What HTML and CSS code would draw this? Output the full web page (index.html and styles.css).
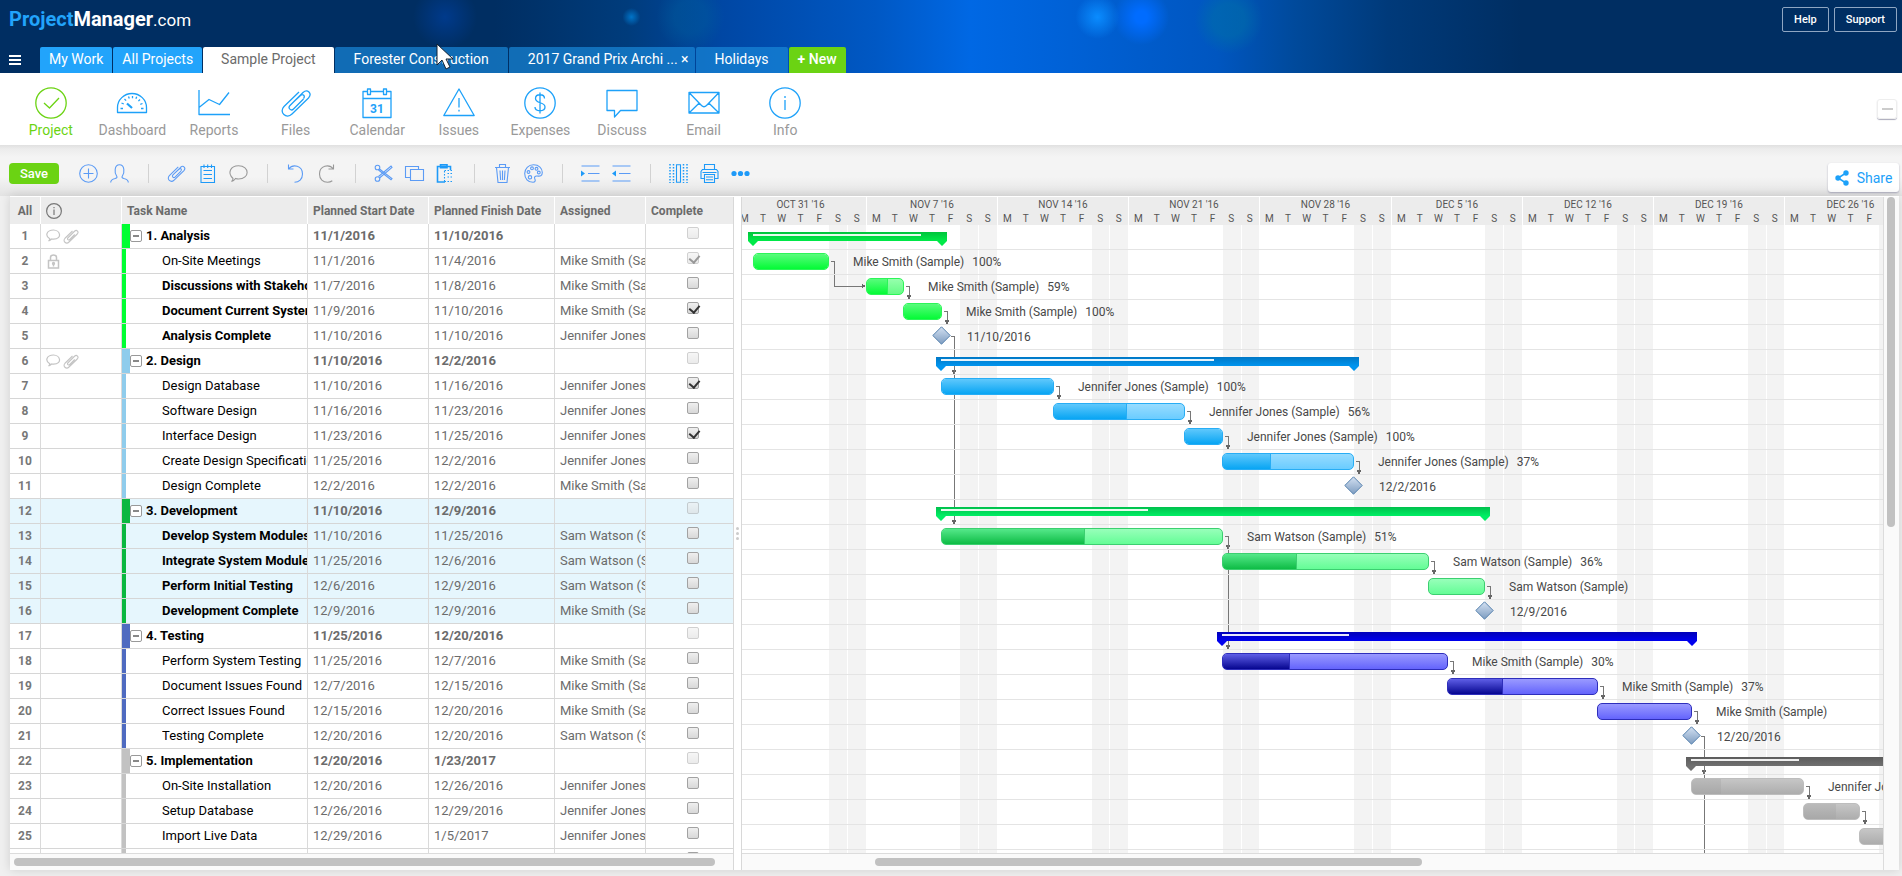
FILE: index.html
```html
<!DOCTYPE html>
<html lang="en">
<head>
<meta charset="utf-8">
<title>Sample Project - ProjectManager.com</title>
<link rel="stylesheet" href="styles.css">
</head>
<body>
<div class="app">
  <header class="masthead">
    <div class="brand-row">
      <a class="brand" href="#"><span class="brand-first">Project</span><span class="brand-second">Manager</span><span class="brand-third">.com</span></a>
      <div class="account">
        <button class="ghost" type="button">Help</button>
        <button class="ghost" type="button">Support</button>
      </div>
    </div>
    <nav class="tabs" aria-label="Open projects">
      <button class="menu" type="button" aria-label="Menu"><svg width="12" height="10" viewBox="0 0 12 10"><path d="M0 1h12M0 5h12M0 9h12" stroke="#fff" stroke-width="2"/></svg></button>
      <a class="tab tab-main" href="#">My Work</a>
      <a class="tab tab-main" href="#">All Projects</a>
      <a class="tab tab-open" href="#" aria-current="page">Sample Project</a>
      <a class="tab" href="#">Forester Construction</a>
      <a class="tab tab-closable" href="#">2017 Grand Prix Archi ... <span class="tab-close">×</span></a>
      <a class="tab" href="#">Holidays</a>
      <a class="tab tab-new" href="#"><b>+</b> New</a>
    </nav>
    <svg class="cursor" width="18" height="28" viewBox="0 0 18 28"><path d="M1 1v21l5-5 4 9 4-2-4-8h7z" fill="#fff" stroke="#123" stroke-width="1"/></svg>
  </header>

  <div class="modules">
    <nav class="module-list" aria-label="Project views">
      <a class="module module-on" href="#"><svg viewBox="0 0 32 32"><circle cx="16" cy="16" r="15.200"/><path d="M9 16l5.500 5L24 11"/></svg>Project</a>
      <a class="module" href="#"><svg viewBox="0 0 32 32"><path d="M1.500 25.500v-5a14.500 14 0 0 1 29 0v5z"/><path d="M11 16.500l5 4.500" stroke-width="2.200"/><path d="M4.500 21.500h2.500M25 21.500h2.500M5.500 16l2.300 1M8.500 12l1.600 1.600M12.500 9.500l.8 2M16.500 9v2.200M20.700 9.700l-.8 2M24 12.500l-1.600 1.600M26.500 16.500l-2.200.8"/></svg>Dashboard</a>
      <a class="module" href="#"><svg viewBox="0 0 32 32"><path d="M1 3v24.500h31M1 20.500l10-8 10.500 5L31 5.500"/></svg>Reports</a>
      <a class="module" href="#"><svg viewBox="0 0 32 32"><path d="M23.500 12L13.500 22c-2.500 2.500-6-1-3.500-3.500L23 5.500c4.500-4 9.500 1 5.500 5.500L12 27c-5.500 5.500-13.500-1.500-8-7.500L19 5M14 14.500l6.500-6c2.500-2 5 .5 3 3"/></svg>Files</a>
      <a class="module" href="#"><svg viewBox="0 0 32 32"><path d="M6.500 4.500H2v26h28v-26h-4.500M9.500 4.500h13M2 11.500h28"/><path d="M6.500 2h3v5.500h-3zM22.500 2h3v5.500h-3z"/><text class="icon-date" x="16" y="25.500">31</text></svg>Calendar</a>
      <a class="module" href="#"><svg viewBox="0 0 32 32"><path d="M16 2l15.200 26.500H.8zM16 11v9.500M16 22.800v1.800"/></svg>Issues</a>
      <a class="module" href="#"><svg viewBox="0 0 32 32"><circle cx="16" cy="16" r="15.200"/><path d="M20.500 11.500c0-5-9-5-9 0 0 5.500 9.500 3 9.500 8.500 0 5-10 5-10 0M16 5.500v21"/></svg>Expenses</a>
      <a class="module" href="#"><svg viewBox="0 0 32 32"><path d="M1 3.500h30v20H14.500L8.500 30v-6.500H1z"/></svg>Discuss</a>
      <a class="module" href="#"><svg viewBox="0 0 32 32"><path d="M1 5.500h30v20.500H1zM1 5.500l12.500 13c1.600 1.600 3.400 1.600 5 0L31 5.500M1 26l10.500-10.200M31 26L20.500 15.800"/></svg>Email</a>
      <a class="module" href="#"><svg viewBox="0 0 32 32"><circle cx="16" cy="16" r="15.200"/><path d="M16 13v10M16 9v2"/></svg>Info</a>
    </nav>
    <button class="collapse" type="button" aria-label="Collapse"></button>
  </div>

  <div class="toolbar">
    <button class="save" type="button">Save</button>
    <div class="tools">
      <button class="tool" type="button" aria-label="Add task"><svg viewBox="0 0 19 19"><circle cx="9.500" cy="9.500" r="8.800"/><path d="M9.500 4.500v10M4.500 9.500h10"/></svg></button>
      <button class="tool" type="button" aria-label="Assign"><svg viewBox="0 0 19 19"><path d="M.7 18.500c0-3 2-3.500 4.500-4 2-.5 2.200-1.300 1.300-2.700C4.500 9 4 .8 9.500.8s5 8.200 3 11c-.9 1.400-.7 2.200 1.300 2.700 2.500.5 4.500 1 4.500 4"/></svg></button>
      <span class="rule"></span>
      <button class="tool" type="button" aria-label="Attach"><svg viewBox="0 0 32 32"><path stroke-width="1.800" d="M23.500 12L13.500 22c-2.500 2.500-6-1-3.500-3.500L23 5.500c4.500-4 9.500 1 5.500 5.500L12 27c-5.500 5.500-13.500-1.500-8-7.500L19 5M14 14.500l6.500-6c2.500-2 5 .5 3 3"/></svg></button>
      <button class="tool tool-bright" type="button" aria-label="Notes"><svg viewBox="0 0 19 19"><path d="M3 2.500h13.500v16H3zM5.500 6.500h8.500M5.500 10.500h8.500M5.500 14.500h8.500M6 .5v3.500M9.700.5v3.500M13.500.5v3.500"/></svg></button>
      <button class="tool tool-off" type="button" aria-label="Comment"><svg viewBox="0 0 19 19"><path d="M2.500 17.500c1-.8 1.500-2 1.500-3C-2 9 1.500 1.800 9.500 1.800c11.500 0 11.500 13.200 0 13.200-1 0-2-.2-3-.5-1 1.500-2 2.500-4 3z"/></svg></button>
      <span class="rule"></span>
      <button class="tool" type="button" aria-label="Undo"><svg viewBox="0 0 19 19"><path d="M2.500.5v4.500h5M2.500 5C7-.5 16.500 1.500 16.500 10c0 5-3.500 8.300-8 8.300"/></svg></button>
      <button class="tool tool-off" type="button" aria-label="Redo"><svg viewBox="0 0 19 19"><path d="M16.500.5v4.500h-5M16.500 5C12-.5 2.500 1.500 2.500 10c0 5 3.500 8.300 8 8.300 2 0 3.500-.6 4.800-1.600"/></svg></button>
      <span class="rule"></span>
      <button class="tool" type="button" aria-label="Cut"><svg viewBox="0 0 19 19"><circle cx="3.500" cy="3.500" r="2.300"/><circle cx="3.500" cy="15" r="2.300"/><path d="M5.500 5l12.500 9.500-1 1.300L4.500 6M5.500 14L18 3.500 17 2 4.500 12.500"/></svg></button>
      <button class="tool" type="button" aria-label="Copy"><svg viewBox="0 0 19 19"><path d="M5.500 5.500h13v11h-13zM5.500 13.500h-5v-11h13v3"/></svg></button>
      <button class="tool tool-bright" type="button" aria-label="Paste"><svg viewBox="0 0 19 19"><path stroke-width="1.600" d="M9 18H1.500V2.500h13V6M4.500.8h6.500v3H4.500z"/><path stroke-dasharray="1.500 1.500" d="M8.500 7v11M8.500 6.500h8M11.500 9.500h6M11.500 13h6M8.500 17.500h9"/></svg></button>
      <span class="rule"></span>
      <button class="tool" type="button" aria-label="Delete"><svg viewBox="0 0 19 19"><path d="M2 3.500h15M6.500 3.500v-3h6v3M3.500 3.500l1.500 15h9l1.500-15M7 6.500l.6 9.500M9.500 6.500V16M12 6.500l-.6 9.500"/></svg></button>
      <button class="tool" type="button" aria-label="Colour"><svg viewBox="0 0 19 19"><path d="M9.500.8c5.500 0 8.800 3.400 8.800 7.700 0 3.500-2.300 4-5 3.500-2.300-.4-3.300 1-2.500 2.700 1 2 .3 3.600-1.800 3.600C4 18.300.7 14.500.7 9.500S4.500.8 9.500.8z"/><circle cx="4.500" cy="8" r="1.400"/><circle cx="8" cy="4.300" r="1.400"/><circle cx="12.500" cy="4.800" r="1.400"/><circle cx="14.800" cy="8.500" r="1.400"/><circle cx="6" cy="13.300" r="1.700"/></svg></button>
      <span class="rule"></span>
      <button class="tool" type="button" aria-label="Indent"><svg viewBox="0 0 19 19"><path d="M.5 2h18M7 9.500h11.500M.5 17h18"/><path class="solid" d="M0 6.500l4 3-4 3z"/></svg></button>
      <button class="tool" type="button" aria-label="Outdent"><svg viewBox="0 0 19 19"><path d="M.5 2h18M7 9.500h11.500M.5 17h18"/><path class="solid" d="M4 6.500l-4 3 4 3z"/></svg></button>
      <span class="rule"></span>
      <button class="tool tool-bright" type="button" aria-label="Columns"><svg viewBox="0 0 19 19"><path d="M7.500.7h4v17.600h-4z"/><path stroke-width="1.500" stroke-dasharray="1.500 1.500" d="M1 0v19M4.500 0v19M14.500 0v19M18 0v19"/></svg></button>
      <button class="tool tool-bright" type="button" aria-label="Print"><svg viewBox="0 0 19 19"><path d="M4.500 5.500v-5h10v5M4 14.500H1v-7l1.500-2h14L18 7.500v7h-3M4.500 10.500h10v8h-10zM6 13h7M6 15.700h7M2.500 8.500h14"/></svg></button>
      <button class="tool tool-bright" type="button" aria-label="More"><svg viewBox="0 0 19 19"><g class="solid"><circle cx="3" cy="9.500" r="2.600"/><circle cx="9.500" cy="9.500" r="2.600"/><circle cx="16" cy="9.500" r="2.600"/></g></svg></button>
    </div>
    <button class="share" type="button"><svg width="14" height="16" viewBox="0 0 14 16"><path d="M11 3L3 8l8 5" fill="none" stroke="#1da1f9" stroke-width="1.500"/><g fill="#1da1f9"><circle cx="11" cy="3" r="2.700"/><circle cx="3" cy="8" r="2.700"/><circle cx="11" cy="13" r="2.700"/></g></svg>Share</button>
  </div>

  <main class="panel">
    <section class="sheet" aria-label="Tasks">
      <div class="sheet-view">
        <table class="tasks">
          <colgroup><col class="c-num"><col class="c-info"><col class="c-name"><col class="c-start"><col class="c-finish"><col class="c-who"><col class="c-done"></colgroup>
          <thead>
            <tr>
              <th class="num">All</th>
              <th class="info"><svg width="16" height="16" viewBox="0 0 16 16" fill="none" stroke="#777" stroke-width="1.200"><circle cx="8" cy="8" r="7.400"/><path d="M8 6.500v5.500M8 4v1.300"/></svg></th>
              <th>Task Name</th><th>Planned Start Date</th><th>Planned Finish Date</th><th>Assigned</th><th>Complete</th>
            </tr>
          </thead>
          <tbody id="rows"></tbody>
        </table>
      </div>
      <div class="hscroll"><div class="thumb thumb-sheet"></div></div>
    </section>
    <div class="splitter"><i></i><i></i><i></i></div>
    <section class="gantt" aria-label="Gantt chart">
      <div class="chart">
        <div class="weeks" id="weeks"></div>
        <div class="plot">
          <div class="bands" id="bands"></div>
          <svg class="links" id="links"></svg>
          <div id="bars"></div>
        </div>
      </div>
      <div class="hscroll"><div class="thumb thumb-chart"></div></div>
    </section>
    <div class="vscroll"><div class="vthumb"></div></div>
  </main>
</div>
<script src="app.js"></script>
</body>
</html>
```
FILE: styles.css
```css
* { box-sizing: border-box; }
body { margin: 0; font-family: Roboto, "Liberation Sans", sans-serif; font-size: 13px; color: #6b6b6b; background: #f0f0f0; }
button { font: inherit; cursor: pointer; padding: 0; border: 0; background: none; }
a { color: inherit; text-decoration: none; }

.app { display: flex; flex-direction: column; height: 100vh; overflow: hidden; }

/* Masthead */
.masthead {
  position: relative; flex: none; height: 73px; display: flex; flex-direction: column; justify-content: space-between; color: #fff;
  background:
    radial-gradient(circle at 23.4% 17px, rgba(0, 70, 180, .5), transparent 32px),
    radial-gradient(circle at 33.2% 17px, #0074c8, transparent 9px),
    radial-gradient(circle at 57.7% 17px, #0a8cff, transparent 22px),
    radial-gradient(circle at 60% 17px, #006cff 6px, transparent 28px),
    radial-gradient(circle at 64.6% 20px, rgba(0, 110, 170, .6) 16px, transparent 34px),
    radial-gradient(circle at 36.3% 17px, rgba(0, 100, 160, .35) 16px, transparent 34px),
    linear-gradient(90deg, #002e62 0, #002e62 26%, #003c7c 33%, #0047a4 38%, #0058c4 46%, #0068e4 51%, #0060d4 57%, #0056c0 64%, #004a9c 68%, #003a7a 73%, #002e62 80%);
}
.brand-row { display: flex; justify-content: space-between; padding: 7px 5px 0 9px; }
.brand { font-size: 20px; line-height: 25px; }
.brand-first { color: #22a4fb; font-weight: 700; }
.brand-second { font-weight: 700; }
.brand-third { font-size: 17px; }
.account { display: flex; gap: 5px; }
.ghost { height: 25px; padding: 0 11px; border: 1px solid #8fa6c2; border-radius: 2px; color: #fff; font-size: 11px; font-weight: 500; }
.tabs { display: flex; gap: 1px; height: 26px; font-size: 14px; line-height: 25px; }
.menu { width: 39px; padding-left: 9px; display: flex; align-items: center; }
.tab { padding: 0 19px; background: rgba(24, 136, 216, .7); border-radius: 2px 2px 0 0; white-space: nowrap; }
.tab-main { padding: 0 9px; background: #22a4fb; }
.tab-open { padding: 0 18px; background: #fff; color: #6b6b6b; }
.tab-closable { padding-right: 6px; }
.tab-new { padding: 0 9px; background: #6bd313; font-weight: 500; }
.cursor { position: absolute; left: 436px; top: 43px; }

/* Module navigation */
.modules { flex: none; height: 72px; display: flex; align-items: center; justify-content: space-between; padding: 0 5px 0 10px; background: #fff; }
.module-list { display: grid; grid-template-columns: repeat(10, 1fr); width: 816px; height: 72px; padding-top: 14px; }
.module { display: flex; flex-direction: column; align-items: center; gap: 2px; font-size: 14px; line-height: 18px; color: #999; }
.module svg { width: 32px; height: 32px; fill: none; stroke: #1da1f9; stroke-width: 1.3; stroke-linejoin: round; }
.module-on { color: #6bd313; }
.module-on svg { stroke: #6bd313; }
.module .icon-date { fill: #1da1f9; stroke: none; font-size: 12px; font-weight: 700; text-anchor: middle; }
.collapse { width: 20px; height: 20px; border-radius: 3px; border: 1px solid #eee; box-shadow: 0 1px 1px #aab; display: grid; place-items: center; }
.collapse::before { content: ""; width: 11px; height: 2px; background: #ccc; }

/* Toolbar */
.toolbar {
  flex: none; height: 51px; display: flex; align-items: flex-start; padding: 18px 3px 0 9px;
  background: linear-gradient(#e0e0e0 0, #ececec 4px, #f4f4f4 12px, #f4f4f4 32px, #e3e3e3 100%);
}
.save { width: 50px; height: 21px; border-radius: 4px; background: #6bd313; color: #fff; font-weight: 500; }
.tools { display: flex; align-items: center; height: 21px; margin-left: 20px; }
.tool { width: 19px; height: 19px; color: #5b9bf5; }
.tool + .tool { margin-left: 12px; }
.tool svg { display: block; width: 19px; height: 19px; fill: none; stroke: currentColor; stroke-width: 1.1; overflow: visible; }
.tool-bright { color: #1e9af8; }
.tool-off { color: #999; }
.tool svg .solid { fill: #1e9af8; stroke: none; }
.rule { width: 1px; height: 19px; margin: 0 18px 0 19px; background: #d2d2d2; }
.share { width: 71px; height: 29px; margin-left: auto; display: flex; align-items: center; justify-content: center; gap: 8px; border-radius: 3px; background: #fff; box-shadow: 0 1px 2px #aab; color: #1da1f9; font-size: 14px; }

/* Panel */
.panel { flex: 1; min-height: 0; display: flex; margin: 0 3px 6px 10px; background: #fff; border-top: 1px solid #fff; box-shadow: 0 0 10px rgba(0, 0, 0, .14); }
.sheet { flex: none; width: 724px; display: flex; flex-direction: column; border-right: 1px solid #d8d8d8; }
.sheet-view { flex: 1; min-height: 0; overflow: hidden; }
.tasks { table-layout: fixed; width: 724px; border-collapse: separate; border-spacing: 0; line-height: 16px; }
.c-num { width: 31px; } .c-info { width: 81px; } .c-name { width: 186px; } .c-start { width: 121px; } .c-finish { width: 126px; } .c-who { width: 91px; } .c-done { width: 88px; }
.tasks th { height: 27px; padding: 0 5px; background: #ececec; border-right: 1px solid #fff; font-size: 12px; font-weight: 700; text-align: left; white-space: nowrap; }
.tasks td { height: 25px; padding: 0 5px; border-right: 1px solid #dadada; border-bottom: 1px solid #d6d6d6; overflow: hidden; white-space: nowrap; }
.tasks .num { padding: 0; text-align: center; font-size: 12px; font-weight: 700; color: #777; }
.tasks th.num { color: #6b6b6b; }
.tasks .info { padding: 0 0 0 5px; }
.tasks .info svg { display: block; }
.marks { display: flex; gap: 2px; }
.tasks .name { padding: 0; color: #000; }
.label { display: flex; align-items: center; height: 24px; overflow: hidden; border-left: 4px solid; padding-left: 36px; }
.label span { flex: 1; min-width: 0; overflow: hidden; color: #000; }
.group .label { border-left-width: 8px; padding-left: 0; gap: 4px; }
.group td { font-weight: 700; }
.strong .name { font-weight: 700; }
.picked td { background: #e6f6fd; }
.fold { width: 12px; height: 12px; border: 1px solid #999; border-radius: 2px; background: #fff; display: grid; place-items: center; }
.fold::before { content: ""; width: 6px; height: 2px; background: #888; }
.g1 .label { border-color: #00ff32; }
.g2 .label { border-color: #8fccec; }
.g3 .label { border-color: #0bb740; }
.g4 .label { border-color: #4f6bc0; }
.g5 .label { border-color: #c2c2c2; }
.tasks .done { vertical-align: top; padding-right: 3px; padding-left: 10px; }
.tick { appearance: none; display: block; width: 12px; height: 12px; margin: 3px auto 0; border: 1px solid #a2a2a2; border-radius: 2px; background: linear-gradient(#efefef, #d8d8d8); position: relative; }
.tick:disabled { opacity: .5; }
.tick:checked::before { content: ""; position: absolute; left: 3px; top: 0; width: 5px; height: 8px; border: solid #333; border-width: 0 2px 2px 0; transform: rotate(40deg); }

/* Scrollbars */
.hscroll { flex: none; height: 17px; padding: 4px; background: #fafafa; border-top: 1px solid #dcdcdc; }
.thumb { height: 8px; border-radius: 4px; background: #c1c1c1; }
.thumb-sheet { width: 98%; }
.thumb-chart { width: 48.3%; margin-left: 11.4%; }
.vscroll { flex: none; width: 16px; padding: 0 4px 0 3px; background: #fafafa; border-left: 1px solid #dcdcdc; }
.vthumb { height: 49%; border-radius: 4px; background: #c1c1c1; }
.splitter { flex: none; width: 8px; display: flex; flex-direction: column; align-items: center; justify-content: center; gap: 2px; border-right: 1px solid #d8d8d8; }
.splitter i { width: 3px; height: 3px; border-radius: 50%; background: #ccc; }

/* Gantt */
.gantt { flex: 1; min-width: 0; display: flex; flex-direction: column; }
.chart { flex: 1; min-height: 0; overflow: hidden; color: #555; }
.weeks { display: flex; height: 28px; margin-left: -7px; background: #ececec; }
.week { flex: none; border-right: 1px solid #fff; font-size: 10px; text-align: center; }
.week-title { line-height: 15px; }
.days { display: grid; grid-template-columns: repeat(7, 1fr); line-height: 13px; }
.plot { position: relative; }
.band { position: absolute; top: 0; bottom: 0; background: #f3f3f3; border-right: 1px solid #fff; }
.links { position: absolute; left: 0; top: 0; width: 100%; height: 100%; shape-rendering: crispEdges; }
.lane { position: relative; height: 25px; border-bottom: 1px solid #e4e4e4; }
.bar { position: absolute; top: 3px; height: 17px; border: 1px solid; border-radius: 5px; overflow: hidden; }
.bar-done { height: 100%; border-right: 1px solid; border-color: inherit; }
.bar-done.full { border-right: 0; }
.caption { position: absolute; top: 4px; font-size: 12px; line-height: 17px; color: #484848; white-space: nowrap; }
.caption span { margin-left: 8px; }
.summary { position: absolute; top: 7px; height: 14px; clip-path: polygon(0 0, 100% 0, 100% 9px, calc(100% - 5px) 14px, calc(100% - 10px) 9px, 10px 9px, 5px 14px, 0 9px); padding: 2px 5px; }
.summary div { height: 2px; background: #fff; opacity: .9; }
.diamond { position: absolute; top: 1px; }
.k1 .summary { background: linear-gradient(#00c43c, #00ea48 9px); }
.k2 .summary { background: linear-gradient(#0078c6, #0094ee 9px); }
.k3 .summary { background: linear-gradient(#00c04c, #00ee64 9px); }
.k4 .summary { background: linear-gradient(#0000b8, #0000ee 9px); }
.k5 .summary { background: linear-gradient(#5c5c5c, #707070 9px); }
.k1 .bar { border-color: #2cf558; background: linear-gradient(#96ffad, #66fb86); }
.k1 .bar-done { background: linear-gradient(#58fc7c, #04fb36); }
.k2 .bar { border-color: #27adf5; background: linear-gradient(#98dcff, #6accff); }
.k2 .bar-done { background: linear-gradient(#5fc8fc, #08a5f3); }
.k3 .bar { border-color: #3ccf70; background: linear-gradient(#98ffba, #64fd96); }
.k3 .bar-done { background: linear-gradient(#55e88a, #0ebc45); }
.k4 .bar { border-color: #2e2ebb; background: linear-gradient(#9a9aff, #6464fc); }
.k4 .bar-done { background: linear-gradient(#5e5ee6, #060690); }
.k5 .bar { border-color: #bdbdbd; background: linear-gradient(#c6c6c6, #adadad); }
.k5 .bar-done { background: linear-gradient(#bababa, #a8a8a8); border-right: 0; }
```
FILE: app.js
```js
// Day numbers count from Monday, October 31 2016.
const DAY = 18.75, ORIGIN = -6.6, ROW = 25;
const MS = 'Mike Smith (Sample)', JJ = 'Jennifer Jones (Sample)', SW = 'Sam Watson (Sample)';

// group, name, start, finish, assigned, flags, chart: [kind, from, to, percent, caption]
// flags: G group, B bold, P picked, C checked, D disabled box
const tasks = [
  [1, '1. Analysis', '11/1/2016', '11/10/2016', '', 'GD', ['sum', 1, 11, 89]],
  [1, 'On-Site Meetings', '11/1/2016', '11/4/2016', MS, 'CD', ['bar', 1, 5, 100, '100%']],
  [1, 'Discussions with Stakeholders', '11/7/2016', '11/8/2016', MS, 'B', ['bar', 7, 9, 59, '59%']],
  [1, 'Document Current Systems', '11/9/2016', '11/10/2016', MS, 'BC', ['bar', 9, 11, 100, '100%']],
  [1, 'Analysis Complete', '11/10/2016', '11/10/2016', JJ, 'B', ['mile', 11, 11]],
  [2, '2. Design', '11/10/2016', '12/2/2016', '', 'GD', ['sum', 11, 33, 66]],
  [2, 'Design Database', '11/10/2016', '11/16/2016', JJ, 'C', ['bar', 11, 17, 100, '100%']],
  [2, 'Software Design', '11/16/2016', '11/23/2016', JJ, '', ['bar', 17, 24, 56, '56%']],
  [2, 'Interface Design', '11/23/2016', '11/25/2016', JJ, 'C', ['bar', 24, 26, 100, '100%']],
  [2, 'Create Design Specification', '11/25/2016', '12/2/2016', JJ, '', ['bar', 26, 33, 37, '37%']],
  [2, 'Design Complete', '12/2/2016', '12/2/2016', MS, '', ['mile', 33, 33]],
  [3, '3. Development', '11/10/2016', '12/9/2016', '', 'GPD', ['sum', 11, 40, 38]],
  [3, 'Develop System Modules', '11/10/2016', '11/25/2016', SW, 'BP', ['bar', 11, 26, 51, '51%']],
  [3, 'Integrate System Modules', '11/25/2016', '12/6/2016', SW, 'BP', ['bar', 26, 37, 36, '36%']],
  [3, 'Perform Initial Testing', '12/6/2016', '12/9/2016', SW, 'BP', ['bar', 37, 40, 0, '']],
  [3, 'Development Complete', '12/9/2016', '12/9/2016', MS, 'BP', ['mile', 40, 40]],
  [4, '4. Testing', '11/25/2016', '12/20/2016', '', 'GD', ['sum', 26, 51, 27]],
  [4, 'Perform System Testing', '11/25/2016', '12/7/2016', MS, '', ['bar', 26, 38, 30, '30%']],
  [4, 'Document Issues Found', '12/7/2016', '12/15/2016', MS, '', ['bar', 38, 46, 37, '37%']],
  [4, 'Correct Issues Found', '12/15/2016', '12/20/2016', MS, '', ['bar', 46, 51, 0, '']],
  [4, 'Testing Complete', '12/20/2016', '12/20/2016', SW, '', ['mile', 51, 51]],
  [5, '5. Implementation', '12/20/2016', '1/23/2017', '', 'GD', ['sum', 51, 85, 17]],
  [5, 'On-Site Installation', '12/20/2016', '12/26/2016', JJ, '', ['bar', 51, 57, 26, '26%']],
  [5, 'Setup Database', '12/26/2016', '12/29/2016', JJ, '', ['bar', 57, 60, 58, '']],
  [5, 'Import Live Data', '12/29/2016', '1/5/2017', JJ, '', ['bar', 60, 67, 0, '']],
  [5, '', '', '', '', '', null]
];
const links = [[2, 3], [3, 4], [4, 5], [5, 7], [5, 13], [7, 8], [8, 9], [9, 10], [10, 11], [13, 14], [13, 18],
  [14, 15], [15, 16], [18, 19], [19, 20], [20, 21], [21, 23], [21, 27], [23, 24], [24, 25]];

const chat = '<svg width="15" height="13" viewBox="0 0 15 13" fill="none" stroke="#c4c4c4" stroke-width="1.2"><path d="M2.500 12c1-.6 1.300-1.300 1.200-2.300C-1.500 6.500.8 1 7.500 1s9.300 9 0 9.200c-.8 0-1.500 0-2-.2-.8.9-1.800 1.600-3 2z"/></svg>';
const clip = '<svg width="16" height="15" viewBox="0 0 32 30" fill="none" stroke="#c4c4c4" stroke-width="2.200"><path d="M23.500 11L13.500 21c-2.500 2.500-6-1-3.500-3.500L23 4.500c4.500-4 9.500 1 5.500 5.500L12 26c-5.500 5.500-13.500-1.500-8-7.500L19 4"/></svg>';
const lock = '<svg width="15" height="15" viewBox="0 0 15 15" fill="none" stroke="#c4c4c4" stroke-width="1.500"><path d="M2.500 6.500h10v7.500h-10zM4.500 6.500v-3c0-3.300 6-3.300 6 0v3"/><circle cx="7.500" cy="9.500" r=".9"/><path d="M7.500 10v2.500"/></svg>';
const marks = { 1: chat + clip, 2: lock, 6: chat + clip };

const x = day => Math.round(day * DAY + ORIGIN);
const has = (t, f) => t[5].includes(f);

document.getElementById('rows').innerHTML = tasks.map((t, i) => {
  const cls = [`g${t[0]}`, has(t, 'G') && 'group', has(t, 'B') && 'strong', has(t, 'P') && 'picked'].filter(Boolean).join(' ');
  const fold = has(t, 'G') ? '<button class="fold" type="button" aria-label="Collapse group"></button>' : '';
  return `<tr class="${cls}"><td class="num">${t[1] ? i + 1 : ''}</td>
    <td class="info"><div class="marks">${marks[i + 1] || ''}</div></td>
    <td class="name"><div class="label">${fold}<span>${t[1]}</span></div></td>
    <td>${t[2]}</td><td>${t[3]}</td><td>${t[4]}</td>
    <td class="done"><input class="tick" type="checkbox" aria-label="Complete ${t[1]}"${has(t, 'C') ? ' checked' : ''}${has(t, 'D') ? ' disabled' : ''}></td></tr>`;
}).join('');

const titles = ["OCT 31 '16", "NOV 7 '16", "NOV 14 '16", "NOV 21 '16", "NOV 28 '16", "DEC 5 '16", "DEC 12 '16", "DEC 19 '16", "DEC 26 '16"];
document.getElementById('weeks').innerHTML = titles.map((title, i) =>
  `<div class="week" style="width:${x(i * 7 + 7) - x(i * 7)}px"><div class="week-title">${title}</div>
   <div class="days">${[...'MTWTFSS'].map(d => `<span>${d}</span>`).join('')}</div></div>`).join('');

document.getElementById('bands').innerHTML = titles.map((_, i) => [5, 6].map(d => {
  const from = x(i * 7 + d);
  return `<div class="band" style="left:${from}px;width:${x(i * 7 + d + 1) - from}px"></div>`;
}).join('')).join('');

const diamond = '<svg width="19" height="19" viewBox="0 0 19 19"><defs><linearGradient id="steel" x1="0" y1="0" x2="0" y2="1"><stop offset="0" stop-color="#d4e1f2"/><stop offset="1" stop-color="#7d9cc0"/></linearGradient></defs><path d="M9.500 .8l8.700 8.700-8.700 8.700L.8 9.500z" fill="url(#steel)" stroke="#5580ad"/></svg>';

document.getElementById('bars').innerHTML = tasks.map(t => {
  if (!t[6]) return `<div class="lane k${t[0]}"></div>`;
  const [kind, from, to, pct, note] = t[6];
  const a = x(from), b = x(to);
  let body;
  if (kind === 'sum') {
    body = `<div class="summary" style="left:${a - 6}px;width:${b - a + 11}px"><div style="width:${pct}%"></div></div>`;
  } else if (kind === 'mile') {
    body = `<div class="diamond" style="left:${a - 10}px">${diamond}</div><div class="caption" style="left:${a + 25}px">${t[3]}</div>`;
  } else {
    const done = pct ? `<div class="bar-done${pct === 100 ? ' full' : ''}" style="width:${pct}%"></div>` : '';
    body = `<div class="bar" style="left:${a - 1}px;width:${b - a + 1}px">${done}</div>
      <div class="caption" style="left:${b + 24}px">${t[4]}<span>${note}</span></div>`;
  }
  return `<div class="lane k${t[0]}">${body}</div>`;
}).join('');

document.getElementById('links').innerHTML = links.map(([from, to]) => {
  const src = tasks[from - 1][6], dst = tasks[to - 1];
  const mile = src[0] === 'mile';
  const b = x(src[2]), y = (from - 1) * ROW + 11;
  if (from === 2) {
    const end = x(7) - 2, y2 = (to - 1) * ROW + 11;
    return `<path d="M${b + 2} ${y}H${b + 5}V${y2}H${end}" fill="none" stroke="#777"/><path d="M${end - 3} ${y2 - 2}l4 2-4 2z" fill="#666"/>`;
  }
  const vx = b + (mile ? 12 : 5), tip = (to - 1) * ROW - 1;
  const head = dst ? `<path d="M${vx - 2} ${tip - 4}h4l-2 4z" fill="#666" stroke="#666"/>` : '';
  return `<path d="M${b + (mile ? 9 : 2)} ${y}H${vx}V${tip}" fill="none" stroke="#777"/>${head}`;
}).join('');
```
